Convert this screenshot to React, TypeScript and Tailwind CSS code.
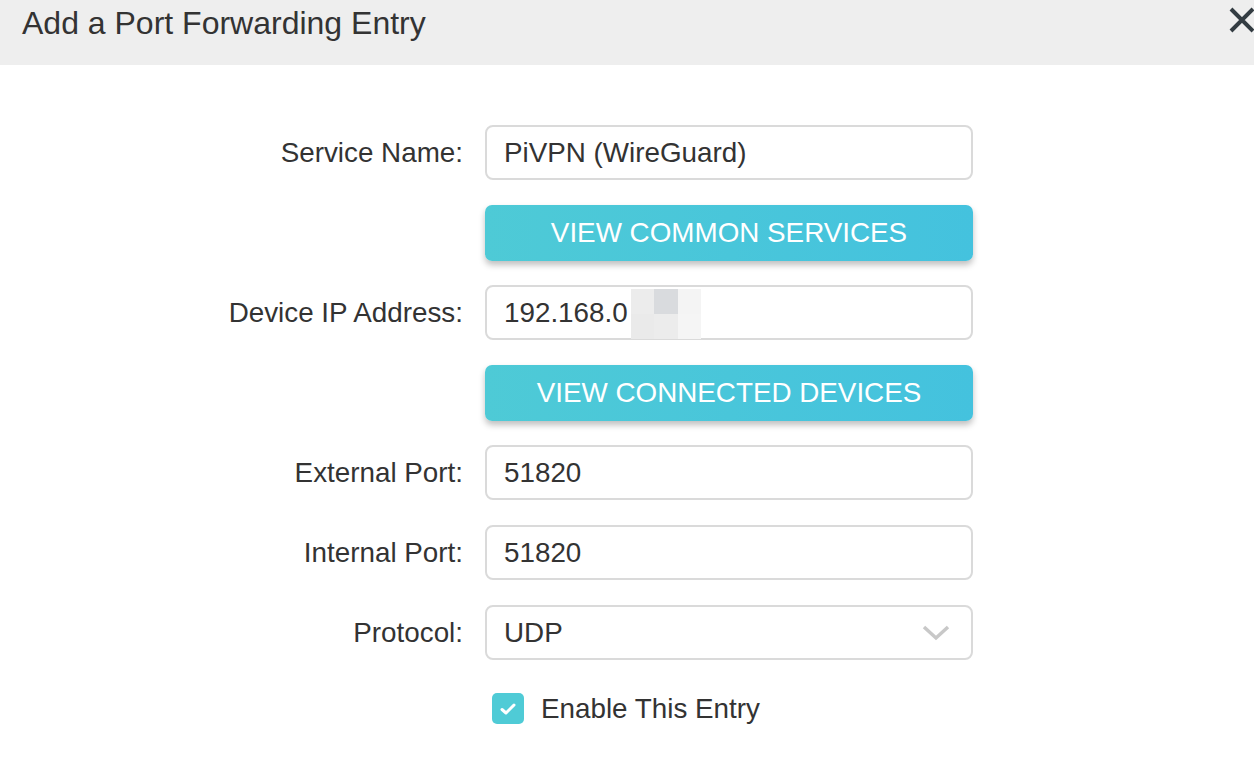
import React from "react";

const font = { fontFamily: '"Liberation Sans", Arial, sans-serif' };

function Row({ label, children }: { label?: string; children: React.ReactNode }) {
  return (
    <div className="flex h-[55px] items-center">
      <div className="w-[463px] shrink-0 pr-0 text-right text-[27.8px] text-[#333]">{label}</div>
      <div className="ml-[22px] h-full w-[488px] shrink-0">{children}</div>
    </div>
  );
}

function Input({ value, children }: { value: string; children?: React.ReactNode }) {
  return (
    <div className="relative flex h-full w-full items-center rounded-[8px] border-2 border-[#dadada] bg-white pl-[17px] text-[27.8px] text-[#333]">
      <span>{value}</span>
      {children}
    </div>
  );
}

function Btn({ text }: { text: string }) {
  return (
    <div className="flex h-[56px] w-full items-center justify-center rounded-[7px] bg-gradient-to-r from-[#4ecad6] to-[#44c2de] text-[27.8px] text-white shadow-[0_4px_6px_rgba(0,0,0,0.25)]">
      {text}
    </div>
  );
}

export default function App() {
  return (
    <div style={font} className="h-[783px] w-[1254px] overflow-hidden bg-white">
      <div className="relative flex h-[65px] items-start bg-[#eeeeee] pl-[22px] pt-[3px]">
        <span className="text-[32px] leading-[40px] text-[#333]">Add a Port Forwarding Entry</span>
        <svg className="absolute left-[1228px] top-[7px]" width="28" height="26" viewBox="0 0 28 26">
          <path d="M3 2 L25 24 M25 2 L3 24" stroke="#333c42" strokeWidth="4" strokeLinecap="butt" />
        </svg>
      </div>
      <div className="flex flex-col gap-[25px] pt-[60px]">
        <Row label="Service Name:">
          <Input value="PiVPN (WireGuard)" />
        </Row>
        <Row>
          <Btn text="VIEW COMMON SERVICES" />
        </Row>
        <Row label="Device IP Address:">
          <Input value="192.168.0">
            <div className="absolute left-[144px] top-[2px] grid grid-cols-[23px_24px_23px] grid-rows-[25px_25px]">
              <div className="bg-[#ececec]" />
              <div className="bg-[#d9dbde]" />
              <div className="bg-[#f4f4f4]" />
              <div className="bg-[#eaeaea]" />
              <div className="bg-[#ececec]" />
              <div className="bg-[#f5f5f5]" />
            </div>
          </Input>
        </Row>
        <Row>
          <Btn text="VIEW CONNECTED DEVICES" />
        </Row>
        <Row label="External Port:">
          <Input value="51820" />
        </Row>
        <Row label="Internal Port:">
          <Input value="51820" />
        </Row>
        <Row label="Protocol:">
          <Input value="UDP">
            <svg className="absolute left-[435px] top-[18px]" width="28" height="16" viewBox="0 0 28 16">
              <path d="M2 2 L14 13 L26 2" stroke="#c8c8c8" strokeWidth="3.5" fill="none" />
            </svg>
          </Input>
        </Row>
      </div>
      <div className="ml-[492px] mt-[28px] flex items-center">
        <div className="flex h-[31px] w-[32px] items-center justify-center rounded-[5px] bg-[#4fcbd6]">
          <svg width="18" height="14" viewBox="0 0 18 14">
            <path d="M3 7.5 L7 11 L15 3" stroke="white" strokeWidth="3" fill="none" strokeLinecap="round" strokeLinejoin="round" />
          </svg>
        </div>
        <span className="ml-[17px] text-[27.8px] text-[#333]">Enable This Entry</span>
      </div>
    </div>
  );
}
